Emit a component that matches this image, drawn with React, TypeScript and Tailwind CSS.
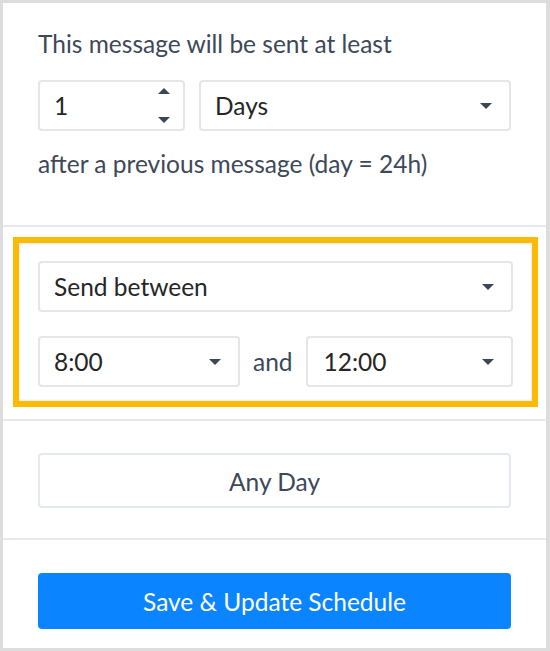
import React from 'react';

const Caret = () => (
  <svg width="12" height="6" viewBox="0 0 12 6" className="shrink-0">
    <path d="M0 0h12L6 6z" fill="#3b4656" />
  </svg>
);

const Select = ({ value, className = '' }: { value: string; className?: string }) => (
  <div
    className={`flex h-[51px] items-center justify-between rounded-[4px] border-2 border-[#e6e6e6] bg-white pl-[14px] pr-[17px] text-[24.5px] text-[#262626] ${className}`}
  >
    <span className="pt-[2px]">{value}</span>
    <Caret />
  </div>
);

const Divider = () => <div className="h-[2px] w-full bg-[#e6eaf0]" />;

const App: React.FC = () => {
  return (
    <div className="h-[651px] w-[550px] bg-[#dddddd] pb-[3px] pl-[3px] pr-[4px] pt-[3px] font-['Lato','Open_Sans',sans-serif]">
      <div className="flex h-full flex-col bg-white">
        {/* delay */}
        <section className="px-[35px] pb-[46px] pt-[26px]">
          <p className="text-[24.5px] leading-[30px] text-[#3d4859]">This message will be sent at least</p>
          <div className="mt-[21px] flex gap-[14px]">
            <div className="flex h-[51px] w-[147px] items-center justify-between rounded-[4px] border-2 border-[#e6e6e6] pl-[14px] pr-[13px] text-[24.5px] text-[#262626]">
              <span className="pt-[2px]">1</span>
              <div className="flex flex-col gap-[23px]">
                <svg width="12" height="6" viewBox="0 0 12 6">
                  <path d="M6 0l6 6H0z" fill="#3b4656" />
                </svg>
                <svg width="12" height="6" viewBox="0 0 12 6">
                  <path d="M0 0h12L6 6z" fill="#3b4656" />
                </svg>
              </div>
            </div>
            <Select value="Days" className="flex-1" />
          </div>
          <p className="mt-[18px] text-[24.5px] leading-[30px] text-[#3d4859]">after a previous message (day = 24h)</p>
        </section>
        <Divider />

        {/* time window */}
        <section className="pb-[12px] pl-[10px] pr-[8px] pt-[10px]">
          <div className="border-[6px] border-[#fcba03] px-[19px] pb-[14px] pt-[18px] shadow-[inset_0_0_3px_rgba(0,0,0,0.15)]">
            <Select value="Send between" />
            <div className="mt-[24px] flex items-center gap-[13px]">
              <Select value="8:00" className="w-[202px]" />
              <span className="pt-[2px] text-[24.5px] text-[#3d4859]">and</span>
              <Select value="12:00" className="flex-1 pl-[16px]" />
            </div>
          </div>
        </section>
        <Divider />

        {/* days */}
        <section className="px-[35px] pb-[30px] pt-[32px]">
          <button className="flex h-[55px] w-full items-center justify-center rounded-[4px] border-2 border-[#e4e9f0] bg-white pt-[3px] text-[24.5px] text-[#3d4859]">
            Any Day
          </button>
        </section>
        <Divider />

        <section className="px-[35px] pt-[33px]">
          <button className="flex h-[56px] w-full items-center justify-center rounded-[4px] bg-[#0a84ff] pt-[2px] text-[24.5px] text-white">
            Save &amp; Update Schedule
          </button>
        </section>
      </div>
    </div>
  );
};

export default App;
